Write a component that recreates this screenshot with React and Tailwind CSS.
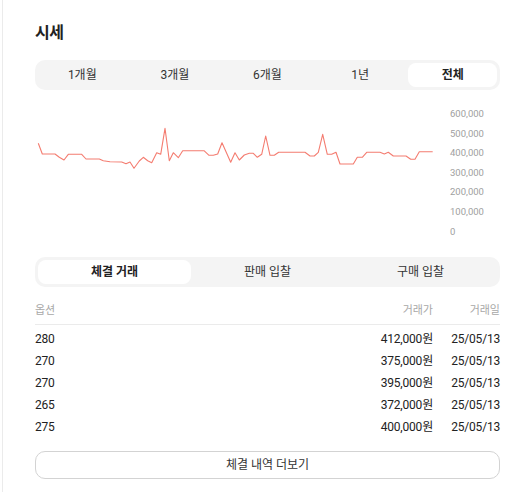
import React, { useState } from 'react';

const periods = ['1개월', '3개월', '6개월', '1년', '전체'];
const tradeTabs = ['체결 거래', '판매 입찰', '구매 입찰'];

const raw = [
  [38.3, 143.3], [42.3, 154], [55, 154], [59.3, 157.3], [64, 160], [68.3, 154.3],
  [81.7, 154.3], [86, 159], [99.3, 159], [103.3, 160.7], [110, 161.7], [121.7, 162],
  [126, 163.7], [130, 162], [134, 168.3], [139.3, 161], [143.3, 157.3], [147.7, 160.7],
  [151.7, 162.7], [156.7, 152.7], [160.7, 154.3], [165, 128.3], [169.3, 160.7],
  [173.3, 152.7], [178.3, 157.7], [182.7, 150.7], [204, 150.7], [209, 155.3],
  [213.3, 155.3], [217.7, 154], [222, 142.7], [230.7, 162.3], [235, 152.7],
  [239.3, 160], [244.3, 155], [249.3, 153.3], [253.3, 153.3], [257.3, 157.3],
  [261.7, 154.3], [265.7, 136], [270, 155.3], [274.3, 155.3], [278.7, 152.3],
  [305, 152.3], [310, 156], [314.3, 156], [318.3, 152.3], [322.7, 134.3],
  [327.3, 154.3], [331.7, 154.3], [336, 152.3], [340, 164], [353.3, 164],
  [357.3, 157.3], [362.3, 157.3], [366.7, 152.3], [380, 152.3], [384.3, 154],
  [388.3, 152.3], [393.3, 156], [406, 156], [410.7, 159.3], [415, 159.3],
  [419.3, 151.7], [432.7, 151.7],
];
const points = raw.map(([x, y]) => `${(x - 35).toFixed(1)},${(y - 100).toFixed(1)}`).join(' ');

const yLabels = ['600,000', '500,000', '400,000', '300,000', '200,000', '100,000', '0'];

const rows = [
  { size: '280', price: '412,000원', date: '25/05/13' },
  { size: '270', price: '375,000원', date: '25/05/13' },
  { size: '270', price: '395,000원', date: '25/05/13' },
  { size: '265', price: '372,000원', date: '25/05/13' },
  { size: '275', price: '400,000원', date: '25/05/13' },
];

export default function App() {
  const [period, setPeriod] = useState(4);
  const [tab, setTab] = useState(0);

  return (
    <div
      className="min-h-[492px] bg-white text-[#222]"
      style={{ fontFamily: 'Roboto, "Noto Sans CJK KR", sans-serif' }}
    >
      <div className="ml-[2px] min-h-[492px] border-l border-[#ebebeb] pl-[32px] pt-[23px]">
        <div className="w-[465px]">
          {/* Title */}
          <h2 className="text-[16px] font-bold leading-[20px] tracking-tight">시세</h2>

          {/* Period tabs */}
          <div className="mt-[17px] flex h-[30px] gap-[4px] rounded-[10px] bg-[#f4f4f4] p-[3px]">
            {periods.map((p, i) => (
              <button
                key={p}
                onClick={() => setPeriod(i)}
                className={
                  'flex-1 rounded-[8px] text-[12px] leading-none ' +
                  (period === i ? 'bg-white font-bold text-[#222]' : 'text-[#333]')
                }
              >
                {p}
              </button>
            ))}
          </div>

          {/* Chart */}
          <div className="mt-[10px] flex h-[150px]">
            <svg width="400" height="150" viewBox="0 0 400 150" className="shrink-0">
              <polyline
                points={points}
                fill="none"
                stroke="#f47c70"
                strokeWidth="1.1"
                strokeLinejoin="round"
              />
            </svg>
            <div className="ml-[15px] flex flex-col pt-[8px]">
              {yLabels.map((l) => (
                <span key={l} className="h-[19.6px] text-[9.5px] leading-[12px] text-[#a0a0a0]">
                  {l}
                </span>
              ))}
            </div>
          </div>

          {/* Trade tabs */}
          <div className="mt-[7px] flex h-[30px] rounded-[10px] bg-[#f4f4f4] p-[3px]">
            {tradeTabs.map((t, i) => (
              <button
                key={t}
                onClick={() => setTab(i)}
                className={
                  'flex-1 rounded-[8px] text-[12px] leading-none ' +
                  (tab === i ? 'bg-white font-bold text-[#222]' : 'text-[#333]')
                }
              >
                {t}
              </button>
            ))}
          </div>

          {/* Table header */}
          <div className="mt-[12px] flex h-[26px] items-center border-b border-[#ebebeb] text-[11px] text-[#a8a8a8]">
            <span className="flex-1">옵션</span>
            <span className="w-[80px] text-right">거래가</span>
            <span className="w-[67px] text-right">거래일</span>
          </div>

          {/* Rows */}
          <div className="pt-[3px]">
            {rows.map((r, i) => (
              <div key={i} className="flex h-[22px] items-center text-[12px] tracking-[-0.2px] text-[#222]">
                <span className="flex-1">{r.size}</span>
                <span className="w-[80px] text-right">{r.price}</span>
                <span className="w-[67px] text-right">{r.date}</span>
              </div>
            ))}
          </div>

          {/* More button */}
          <button className="mt-[13px] flex h-[28px] w-full items-center justify-center rounded-[10px] border border-[#d3d3d3] text-[12px] text-[#333]">
            체결 내역 더보기
          </button>
        </div>
      </div>
    </div>
  );
}
